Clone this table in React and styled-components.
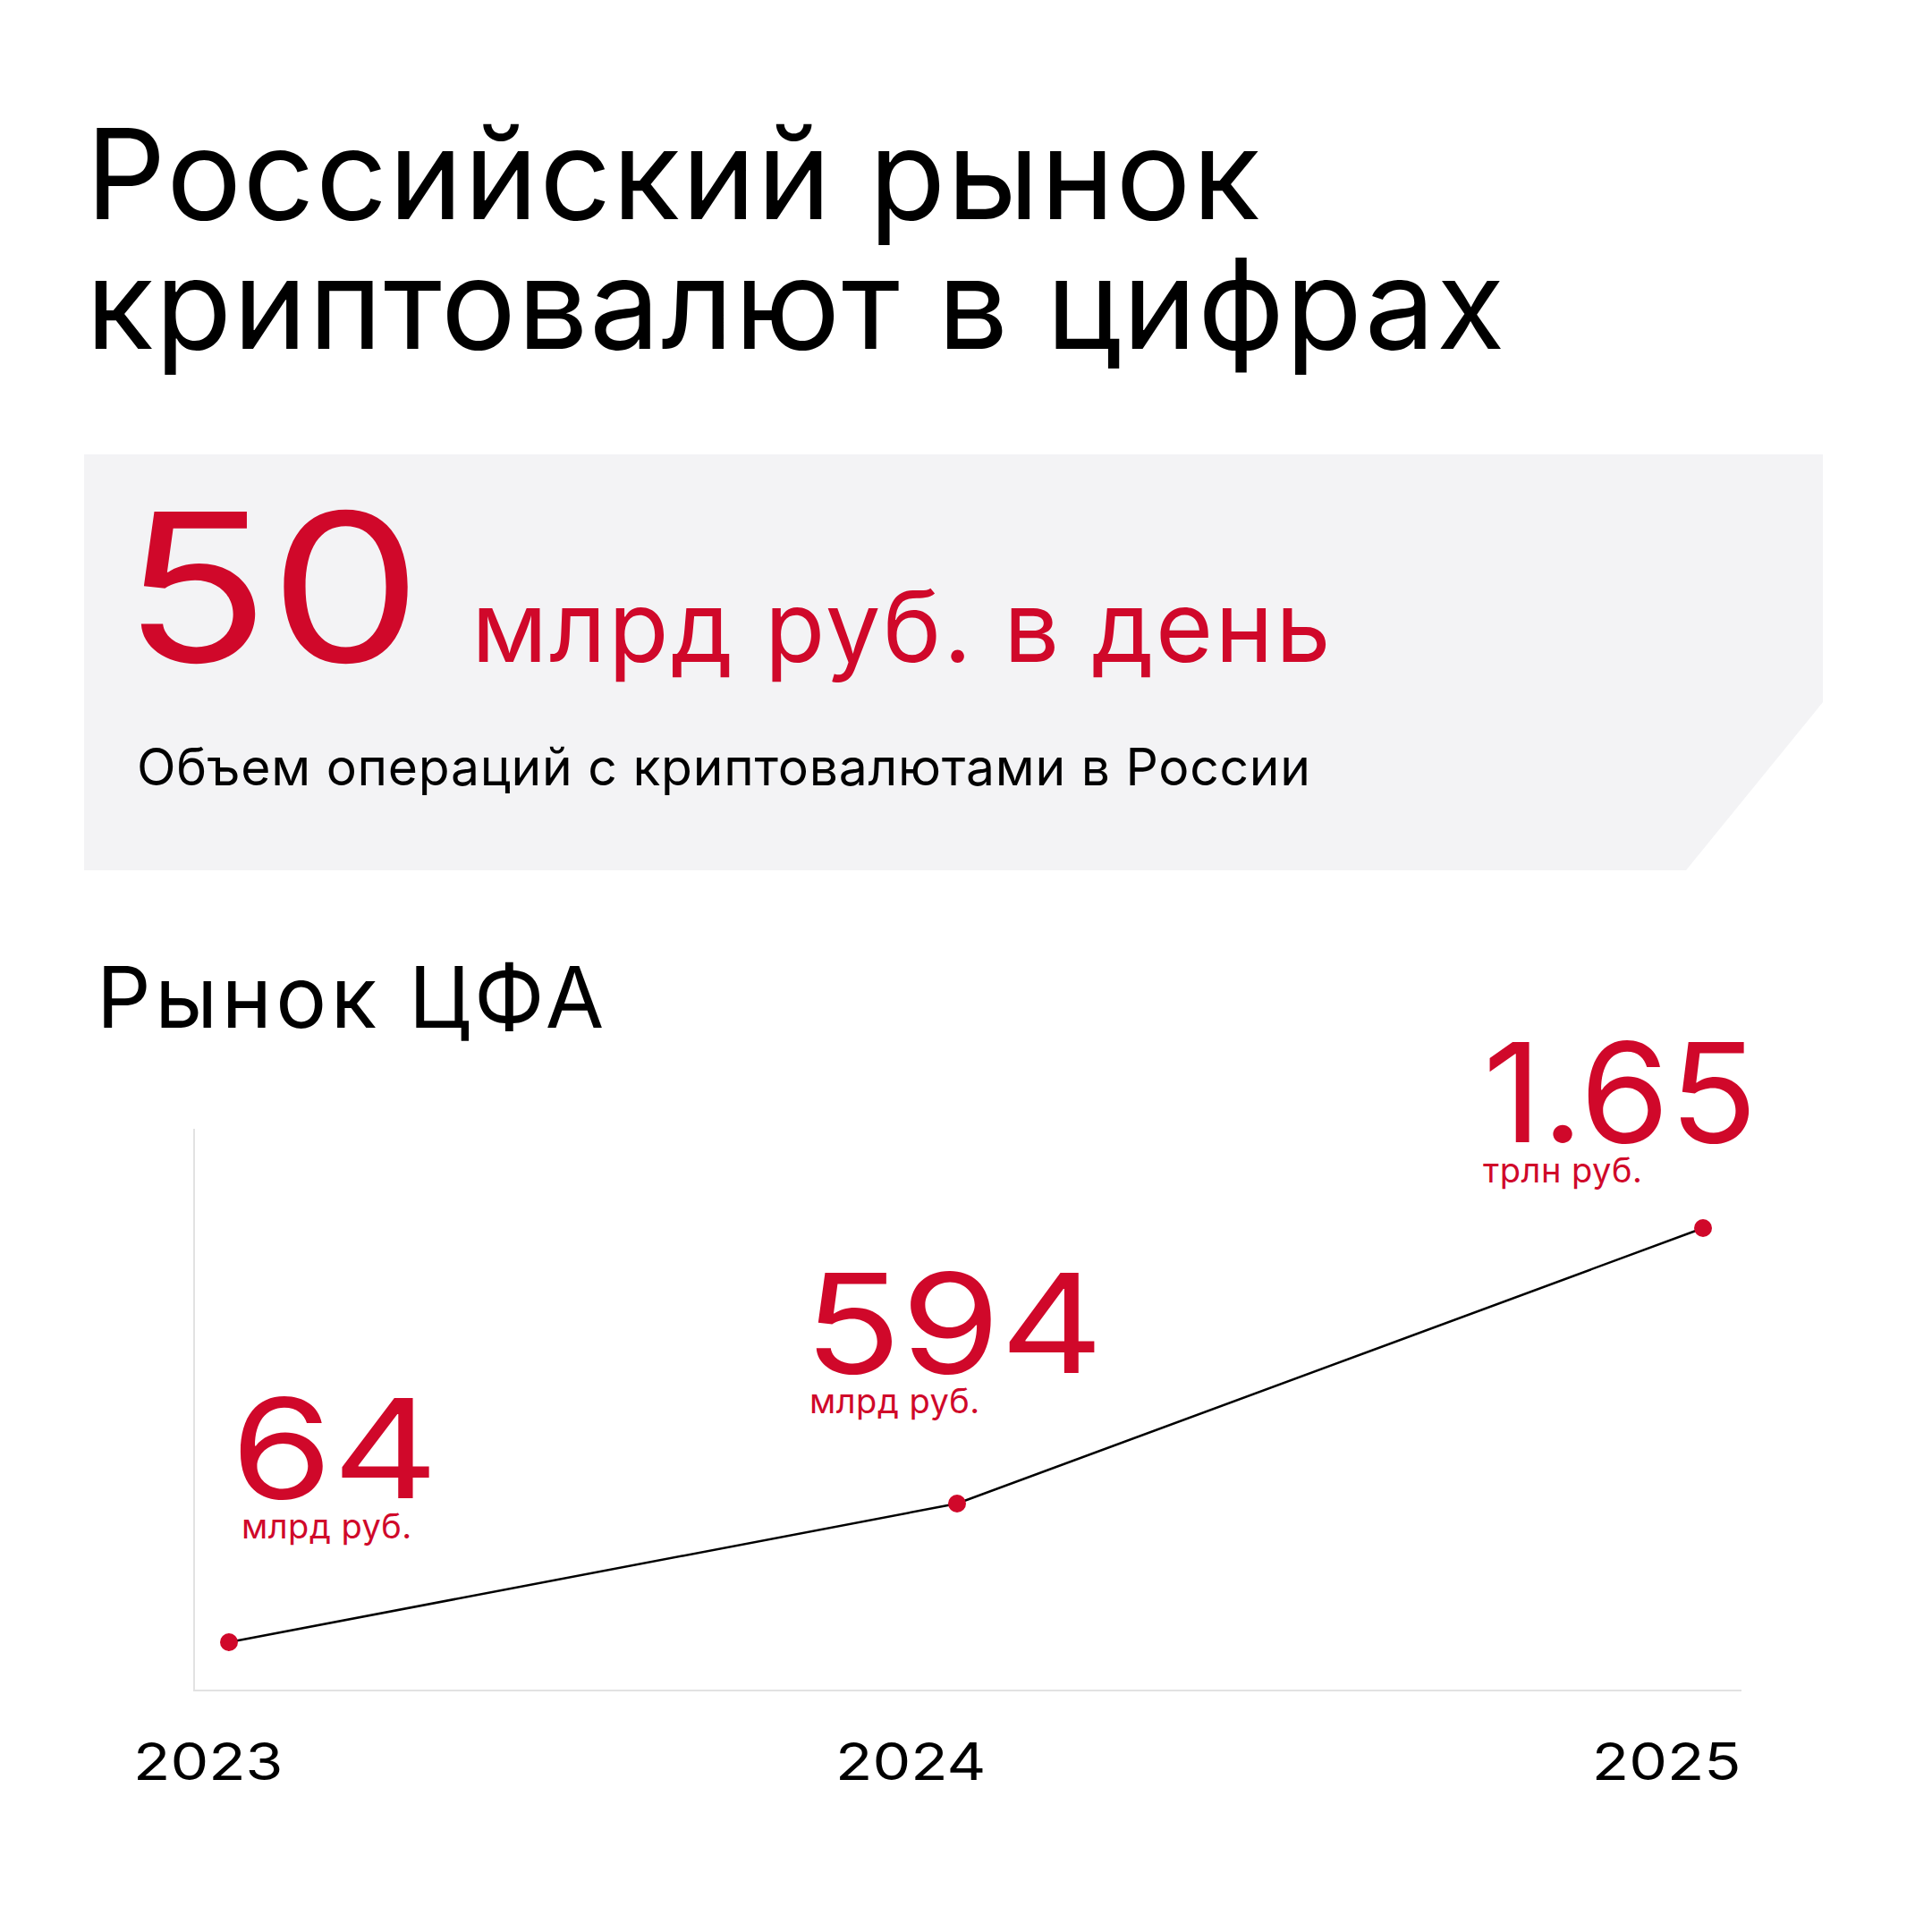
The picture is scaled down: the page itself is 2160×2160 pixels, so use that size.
import React from "react"
import styled, { createGlobalStyle } from "styled-components"

const RED = "#d0082a"

const Global = createGlobalStyle`
  html, body {
    margin: 0;
    padding: 0;
    background: #fff;
  }
  body {
    font-family: Inter, "Noto Sans", sans-serif;
    color: #000;
  }
`

const Page = styled.div`
  width: 2160px;
  height: 2160px;
  box-sizing: border-box;
  padding-left: 94px;
  display: flex;
  flex-direction: column;
  background: #fff;
  overflow: hidden;
`

const Title = styled.h1`
  margin: 122px 0 0 2px;
  font-size: 140px;
  line-height: 145px;
  font-weight: 400;
  letter-spacing: 1.5px;
`

const Highlight = styled.section`
  margin-top: 96px;
  width: 1944px;
  height: 465px;
  box-sizing: border-box;
  padding: 33px 0 0 43px;
  background: #f3f3f5;
  clip-path: polygon(0 0, 100% 0, 100% 277px, calc(100% - 153px) 100%, 0 100%);
`

const BigRow = styled.div`
  display: flex;
  align-items: baseline;
  color: ${RED};
`

// the reference face has wide digits: stretch them and keep the room in flow
const BigNumber = styled.span`
  display: inline-block;
  font-size: 231px;
  line-height: 231px;
  transform: scaleX(1.17);
  transform-origin: left center;
  margin-right: 104px;
`

const BigUnit = styled.span`
  font-size: 110px;
  line-height: 110px;
  letter-spacing: 2.5px;
`

const Caption = styled.p`
  margin: 57px 0 0 16px;
  font-size: 57px;
  line-height: 57px;
  letter-spacing: 0.75px;
`

const SectionTitle = styled.h2`
  margin: 94px 0 0 14px;
  font-size: 95px;
  line-height: 95px;
  font-weight: 400;
  letter-spacing: 4.5px;
`

const Chart = styled.div`
  position: relative;
  margin: 100px 0 0 122px;
  width: 1731px;
  height: 629px;
  box-sizing: border-box;
  border-left: 2px solid #e2e2e2;
  border-bottom: 2px solid #e2e2e2;
`

const Plot = styled.svg`
  position: absolute;
  left: -2px;
  top: 0;
  overflow: visible;
`

const Label = styled.div`
  position: absolute;
  display: flex;
  flex-direction: column;
  align-items: flex-start;
  color: ${RED};
`

const LabelValue = styled.span`
  display: inline-block;
  font-size: 154px;
  line-height: 120px;
  transform: scaleX(${(p) => p.$stretch});
  transform-origin: left center;
`

const LabelUnit = styled.span`
  margin: 8px 0 0 ${(p) => p.$shift}px;
  font-size: 38px;
  line-height: 38px;
  letter-spacing: 0.5px;
`

const Years = styled.div`
  display: grid;
  grid-template-columns: 785px 1fr auto;
  justify-items: start;
  margin: 49px 0 0 55px;
  width: 1798px;
  font-size: 58px;
  line-height: 58px;
`

const Year = styled.span`
  display: inline-block;
  transform: scaleX(1.17);
  transform-origin: ${(p) => p.$origin} center;
`

const points = [
  { x: 40, y: 574, value: "64", unit: "млрд руб.", left: 40, top: 297, stretch: 1.19, shift: 12 },
  { x: 854, y: 419, value: "594", unit: "млрд руб.", left: 681, top: 157, stretch: 1.16, shift: 6 },
  { x: 1688, y: 111, value: "1.65", unit: "трлн руб.", left: 1440, top: -101, stretch: 1.05, shift: 0 },
]

export default function App() {
  return (
    <Page>
      <Global />
      <Title>
        Российский рынок
        <br />
        криптовалют в цифрах
      </Title>
      <Highlight>
        <BigRow>
          <BigNumber>50</BigNumber>
          <BigUnit>млрд руб. в день</BigUnit>
        </BigRow>
        <Caption>Объем операций с криптовалютами в России</Caption>
      </Highlight>
      <SectionTitle>Рынок ЦФА</SectionTitle>
      <Chart>
        <Plot width="1731" height="629">
          <polyline
            points={points.map((p) => `${p.x},${p.y}`).join(" ")}
            fill="none"
            stroke="#000"
            strokeWidth="2.5"
          />
          {points.map((p) => (
            <circle key={p.value} cx={p.x} cy={p.y} r="10" fill={RED} />
          ))}
        </Plot>
        {points.map((p) => (
          <Label key={p.value} style={{ left: p.left, top: p.top }}>
            <LabelValue $stretch={p.stretch}>{p.value}</LabelValue>
            <LabelUnit $shift={p.shift}>{p.unit}</LabelUnit>
          </Label>
        ))}
      </Chart>
      <Years>
        <Year $origin="left">2023</Year>
        <Year $origin="left">2024</Year>
        <Year $origin="right">2025</Year>
      </Years>
    </Page>
  )
}
